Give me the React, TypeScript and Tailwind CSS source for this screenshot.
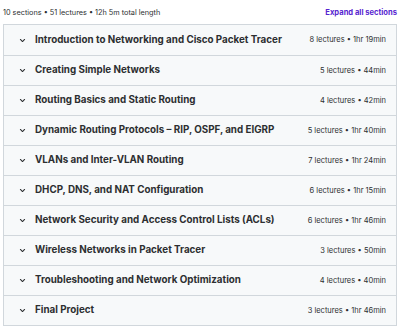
import React from "react";

const sections = [
  ["Introduction to Networking and Cisco Packet Tracer", "8 lectures • 1hr 19min"],
  ["Creating Simple Networks", "5 lectures • 44min"],
  ["Routing Basics and Static Routing", "4 lectures • 42min"],
  ["Dynamic Routing Protocols – RIP, OSPF, and EIGRP", "5 lectures • 1hr 40min"],
  ["VLANs and Inter-VLAN Routing", "7 lectures • 1hr 24min"],
  ["DHCP, DNS, and NAT Configuration", "6 lectures • 1hr 15min"],
  ["Network Security and Access Control Lists (ACLs)", "6 lectures • 1hr 46min"],
  ["Wireless Networks in Packet Tracer", "3 lectures • 50min"],
  ["Troubleshooting and Network Optimization", "4 lectures • 40min"],
  ["Final Project", "3 lectures • 1hr 46min"],
];

function Chevron() {
  return (
    <svg width="7" height="7" viewBox="0 0 10 10" fill="none" stroke="#2d2f31" strokeWidth="1.5" strokeLinecap="round" strokeLinejoin="round">
      <path d="M2 3.5 L5 6.5 L8 3.5" />
    </svg>
  );
}

export default function App() {
  return (
    <div className="w-[400px] h-[327px] bg-white px-[3px]" style={{ fontFamily: "Inter, 'Noto Sans', sans-serif" }}>
      <div className="flex items-center justify-between h-[24px] pt-[2px]">
        <span className="text-[7.3px] text-[#2d2f31]">10 sections • 51 lectures • 12h 5m total length</span>
        <span className="text-[7.6px] font-bold text-[#5624d0]">Expand all sections</span>
      </div>
      <div className="border border-[#d1d7dc]">
        {sections.map(([t, m], i) => (
          <div key={i} className={`flex items-center h-[30px] bg-[#f7f9fa] pl-[15px] pr-[10px] ${i > 0 ? "border-t border-[#d1d7dc]" : ""}`}>
            <Chevron />
            <span className="ml-[9px] text-[9.8px] font-bold text-[#2d2f31] flex-1">{t}</span>
            <span className="text-[7.5px] text-[#2d2f31]">{m}</span>
          </div>
        ))}
      </div>
    </div>
  );
}
